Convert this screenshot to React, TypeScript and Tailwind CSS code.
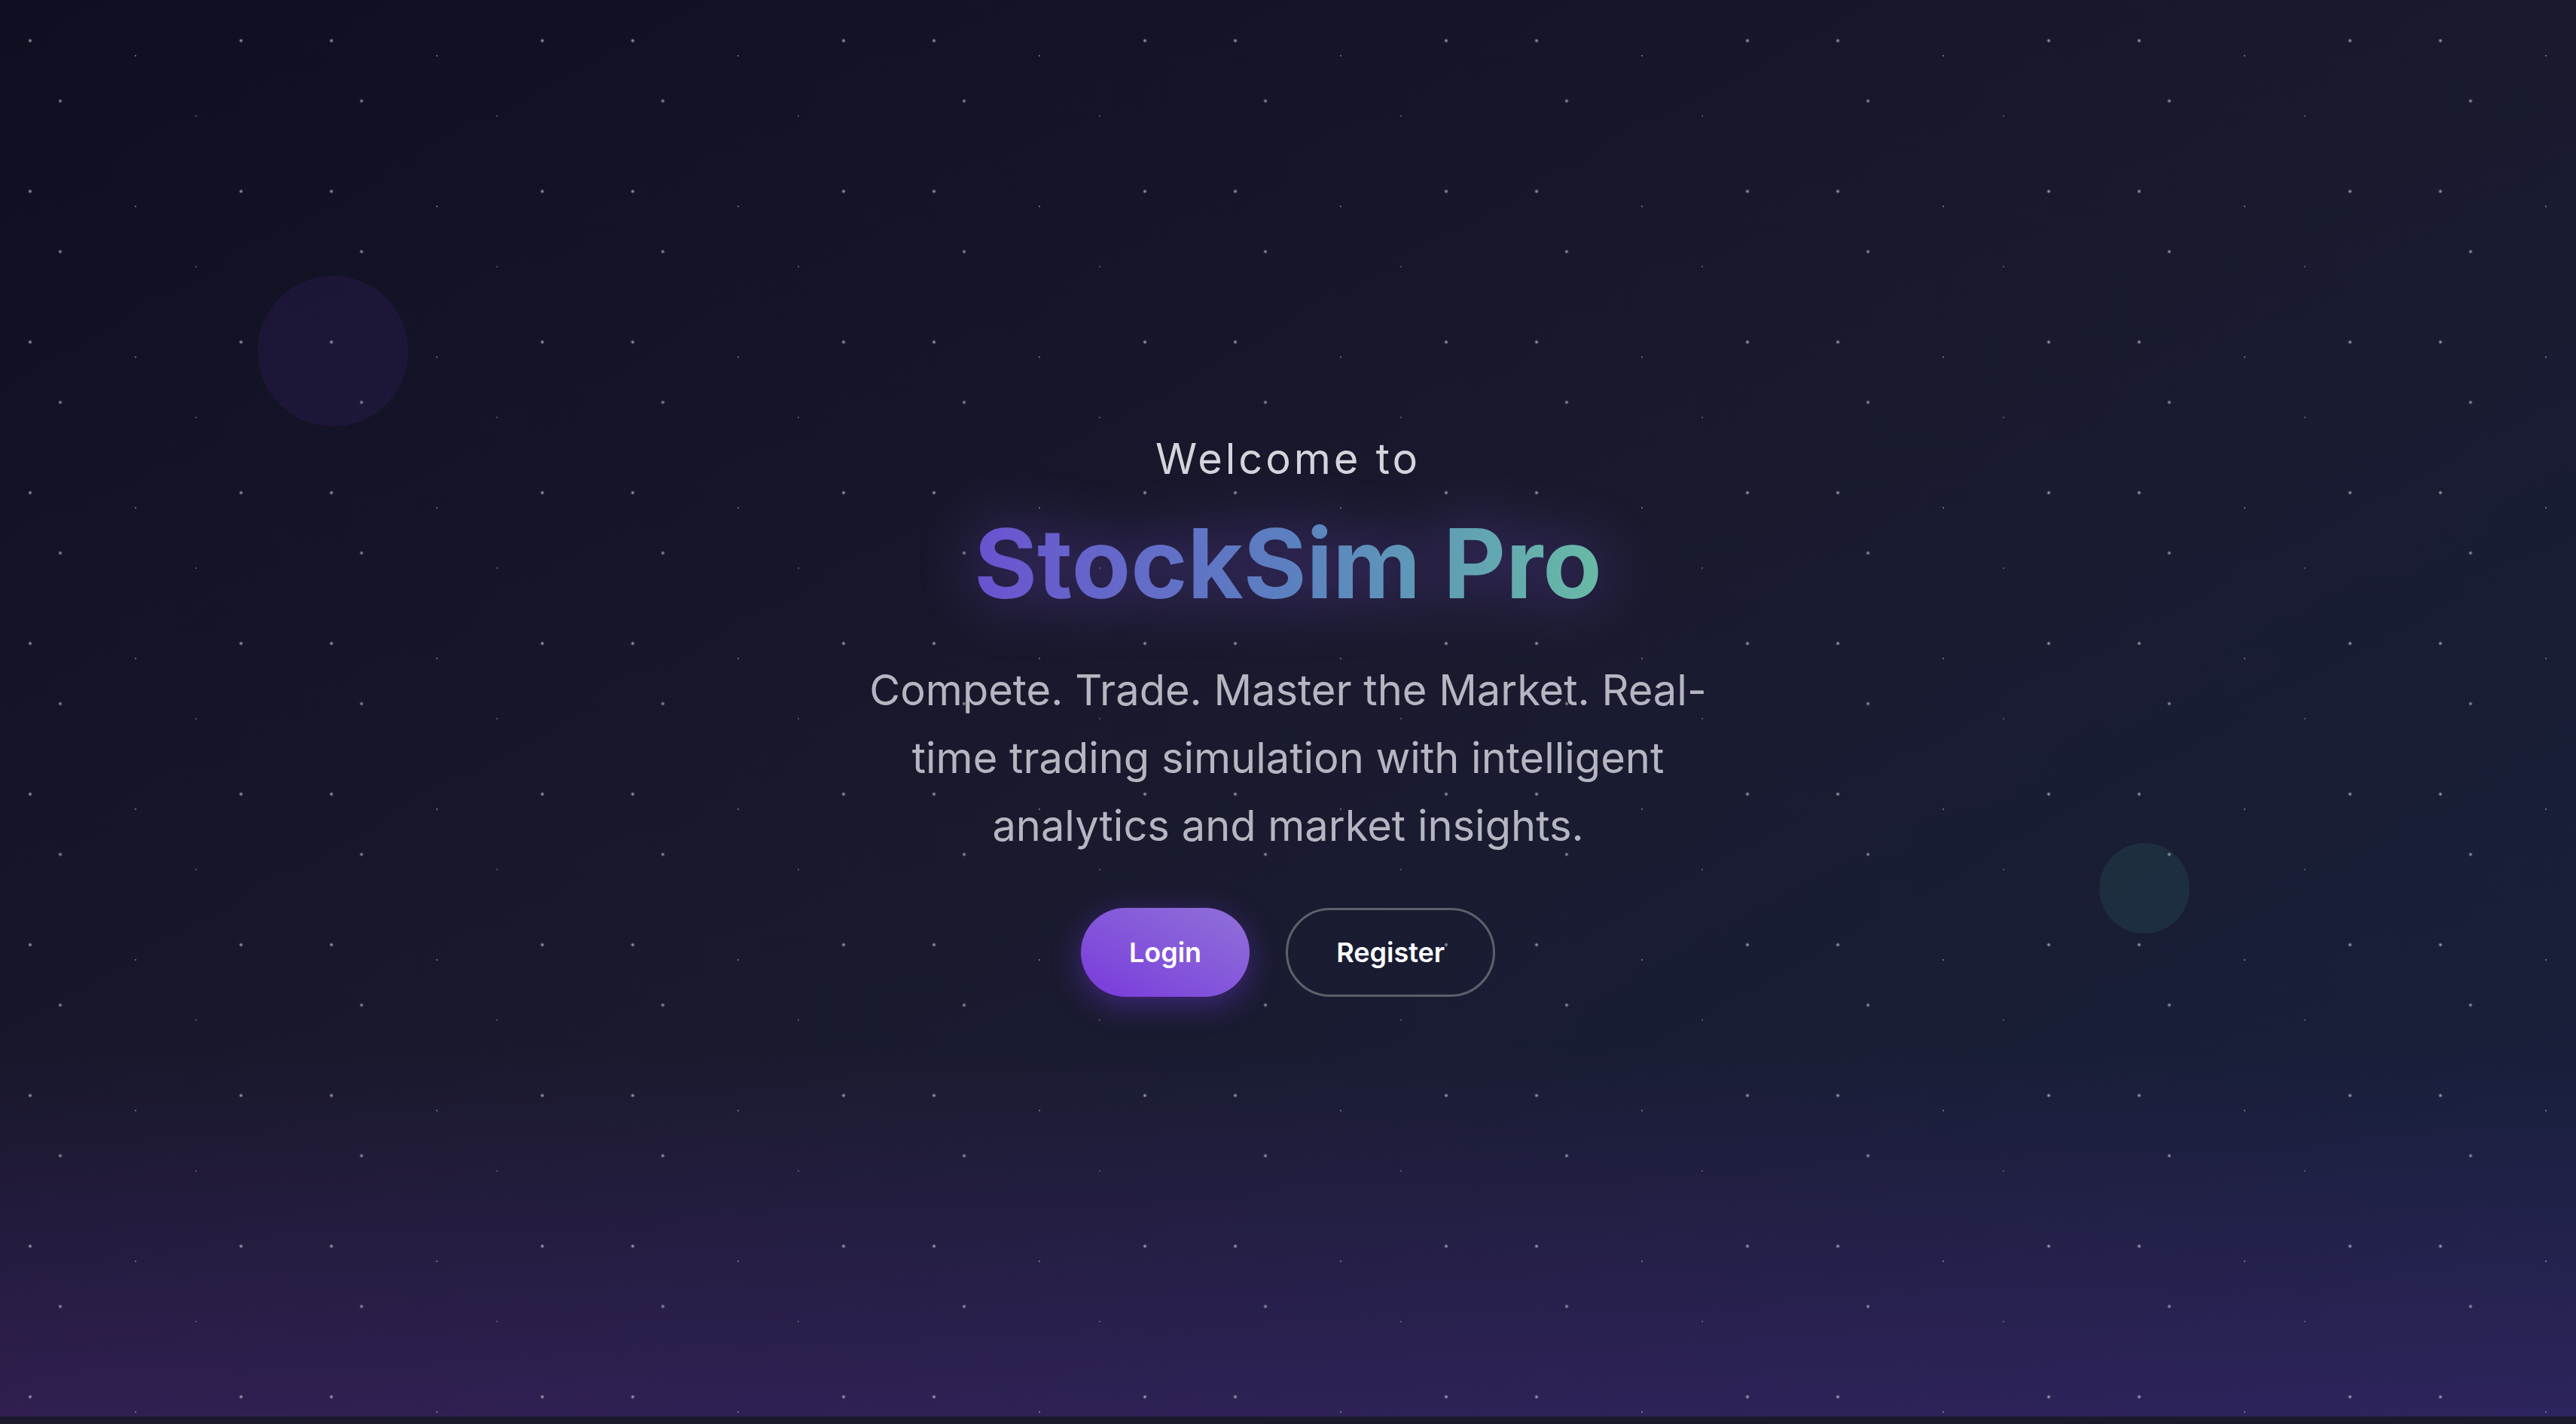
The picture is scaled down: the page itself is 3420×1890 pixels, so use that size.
import React from "react";

// Landing hero for StockSim Pro
export default function App() {
  return (
    <div className="min-h-screen w-full bg-[#1b1a2c] font-['Inter','Noto_Sans',sans-serif]">
      <section className="relative h-[1880px] w-full overflow-hidden bg-gradient-to-br from-[#0f0f22] via-[#1a1a2e] to-[#16213e]">
        {/* bottom purple haze */}
        <div className="absolute inset-x-0 bottom-0 h-[26%] bg-gradient-to-t from-[rgba(147,51,234,0.18)] to-transparent" />

        {/* floating orbs */}
        <div className="absolute left-[342px] top-[366px] h-[200px] w-[200px] rounded-full bg-[rgba(124,58,237,0.09)]" />
        <div className="absolute left-[2787px] top-[1119px] h-[120px] w-[120px] rounded-full bg-[rgba(64,200,160,0.1)]" />

        {/* star field */}
        <div className="absolute inset-0 [background-image:radial-gradient(3px_3px_at_40px_54px,rgba(255,255,255,0.65),transparent),radial-gradient(3px_3px_at_80px_134px,rgba(255,255,255,0.6),transparent),radial-gradient(1.5px_1.5px_at_180px_74px,rgba(255,255,255,0.65),transparent),radial-gradient(1.4px_1.4px_at_260px_154px,rgba(255,255,255,0.5),transparent),radial-gradient(3px_3px_at_320px_54px,rgba(255,255,255,0.65),transparent)] [background-size:400px_200px]" />

        <div className="relative flex h-full flex-col items-center justify-center pt-[18px] text-center">
          <p className="text-[56px] leading-[66px] tracking-[0.07em] text-[#d4d4dc]">Welcome to</p>
          <h1 className="mt-[35px] bg-gradient-to-r from-[#6a52d0] via-[#5b80c0] to-[#68bba5] bg-clip-text text-[128px] font-bold leading-[141px] text-transparent drop-shadow-[0_0_40px_rgba(139,92,246,0.45)]">
            StockSim Pro
          </h1>
          <p className="mt-[53px] max-w-[1160px] text-[56px] leading-[90px] text-[#b6b6c2]">
            Compete. Trade. Master the Market. Real-time trading simulation with intelligent analytics and market insights.
          </p>
          <div className="mt-[64px] flex items-center gap-[48px]">
            <button className="rounded-full bg-gradient-to-tr from-[#7a37dc] to-[#9070d8] px-[64px] py-[32px] text-[36px] font-semibold leading-[54px] text-white shadow-[0_10px_40px_rgba(124,58,237,0.4)]">
              Login
            </button>
            <button className="rounded-full border-[3px] border-[#5f5f6b] px-[64px] py-[29px] text-[36px] font-semibold leading-[54px] text-white">
              Register
            </button>
          </div>
        </div>
      </section>
    </div>
  );
}
